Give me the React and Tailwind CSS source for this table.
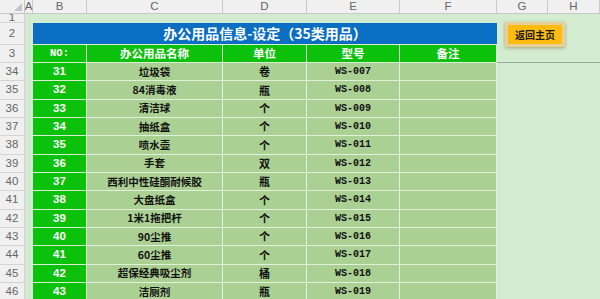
const items = [
  [31, '垃圾袋', '卷', 'WS-007'],
  [32, '84消毒液', '瓶', 'WS-008'],
  [33, '清洁球', '个', 'WS-009'],
  [34, '抽纸盒', '个', 'WS-010'],
  [35, '喷水壶', '个', 'WS-011'],
  [36, '手套', '双', 'WS-012'],
  [37, '西利中性硅酮耐候胶', '瓶', 'WS-013'],
  [38, '大盘纸盒', '个', 'WS-014'],
  [39, '1米1拖把杆', '个', 'WS-015'],
  [40, '90尘推', '个', 'WS-016'],
  [41, '60尘推', '个', 'WS-017'],
  [42, '超保经典吸尘剂', '桶', 'WS-018'],
  [43, '洁厕剂', '瓶', 'WS-019'],
];

const cols = ['A', 'B', 'C', 'D', 'E', 'F', 'G', 'H'];

const cjk = { fontFamily: '"Noto Sans CJK SC", "Liberation Sans", sans-serif' };
const mono = { fontFamily: '"Liberation Mono", "Noto Sans CJK SC", monospace' };
const ui = { fontFamily: '"Liberation Sans", Arial, sans-serif' };

const RowHead = ({ n }) => (
  <div
    style={ui}
    className="flex items-center justify-center bg-[#f0f0f0] border-r border-b border-[#d4d4d4] text-[11.5px] text-[#666]"
  >
    {n}
  </div>
);

const Sheet = ({ children, className = '' }) => (
  <div className={`bg-[#d3ebd0] ${className}`}>{children}</div>
);

export default function App() {
  return (
    <div className="relative w-[600px] h-[299px] overflow-hidden bg-[#d3ebd0]">
      <div className="grid grid-cols-[25px_8px_54px_136px_84px_93px_97px_51px_52px] grid-rows-[14px_9px_22px_18px_repeat(13,18.33px)]">
        {/* column headers */}
        <div className="relative bg-[#f0f0f0] border-r border-b border-[#c6c6c6]">
          <svg className="absolute right-[2px] bottom-[2px]" width="8" height="8" viewBox="0 0 8 8">
            <polygon points="8,0 8,8 0,8" fill="#c4c4c4" />
          </svg>
        </div>
        {cols.map((c) => (
          <div
            key={c}
            style={ui}
            className="flex items-center justify-center bg-[#f0f0f0] border-r border-b border-[#c8c8c8] text-[11.5px] text-[#666]"
          >
            {c}
          </div>
        ))}

        {/* row 1 */}
        <RowHead n={1} />
        <Sheet className="col-span-8" />

        {/* row 2 - title */}
        <RowHead n={2} />
        <Sheet />
        <div
          style={cjk}
          className="col-span-5 flex items-center justify-center bg-[#0a6ec2] border-b border-[#dcefd6] text-white text-[14px] font-bold"
        >
          办公用品信息-设定（35类用品）
        </div>
        <Sheet className="col-span-2" />

        {/* row 3 - header */}
        <RowHead n={3} />
        <Sheet />
        <div style={mono} className="flex items-center justify-center bg-[#0cc10c] border-r border-b border-[#dcefd6] text-white text-[10.5px] font-bold">
          NO:
        </div>
        {['办公用品名称', '单位', '型号', '备注'].map((h) => (
          <div
            key={h}
            style={cjk}
            className="flex items-center justify-center bg-[#0cc10c] border-r border-b border-[#dcefd6] text-white text-[11.5px] font-bold"
          >
            {h}
          </div>
        ))}
        <Sheet className="col-span-2 border-b border-[#9aa89a]" />

        {/* data rows */}
        {items.map(([no, name, unit, code], i) => (
          <div key={no} className="contents">
            <RowHead n={34 + i} />
            <Sheet />
            <div style={ui} className="flex items-center justify-center bg-[#0cc10c] border-r border-b border-[#dcefd6] text-white text-[11.5px] font-bold">
              {no}
            </div>
            <div style={cjk} className="flex items-center justify-center bg-[#abd093] border-r border-b border-[#e2f2da] text-[#111] text-[10.5px] font-bold">
              {name}
            </div>
            <div style={cjk} className="flex items-center justify-center bg-[#abd093] border-r border-b border-[#e2f2da] text-[#111] text-[11px] font-bold">
              {unit}
            </div>
            <div style={mono} className="flex items-center justify-center bg-[#abd093] border-r border-b border-[#e2f2da] text-[#111] text-[10px] font-bold">
              {code}
            </div>
            <div className="bg-[#abd093] border-r border-b border-[#e2f2da]" />
            <Sheet className="col-span-2" />
          </div>
        ))}
      </div>

      {/* button shape floating over sheet */}
      <div className="absolute left-[505px] top-[22px] w-[60px] h-[25px] p-[3px] bg-[#e6cf98] shadow-[0_1px_3px_rgba(120,90,40,0.5)]">
        <div
          style={cjk}
          className="w-full h-full flex items-center justify-center bg-[#fdbb10] text-[10px] font-bold text-[#1a1a1a]"
        >
          返回主页
        </div>
      </div>
    </div>
  );
}
